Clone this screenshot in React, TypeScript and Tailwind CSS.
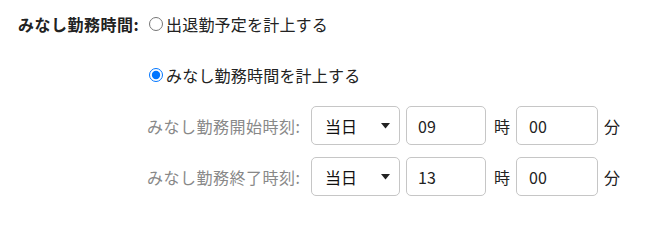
import React from "react";

const font = { fontFamily: '"Noto Sans CJK JP", "Noto Sans", sans-serif' };

function TimeRow({ label, hour }: { label: string; hour: string }) {
  return (
    <div className="flex items-center h-[39px]">
      <div className="w-[164px] text-[16px] text-[#888888] whitespace-nowrap tracking-[0.5px]">{label}</div>
      <div className="w-[89px] h-[39px] border border-[#c6c6c6] rounded-[5px] flex items-center pl-[13px] pr-[9px] justify-between bg-white">
        <span className="text-[16px] text-[#111111]">当日</span>
        <svg width="9" height="6" viewBox="0 0 9 6"><path d="M0 0 L9 0 L4.5 5.5 Z" fill="#222222" /></svg>
      </div>
      <div className="ml-[6px] w-[80px] h-[39px] border border-[#c6c6c6] rounded-[5px] flex items-center pl-[11px] text-[16px] text-[#222222] bg-white">{hour}</div>
      <span className="ml-[8px] text-[16px] text-[#222222]">時</span>
      <div className="ml-[6px] w-[82px] h-[39px] border border-[#c6c6c6] rounded-[5px] flex items-center pl-[12px] text-[16px] text-[#222222] bg-white">00</div>
      <span className="ml-[6px] text-[16px] text-[#222222]">分</span>
    </div>
  );
}

export default function App() {
  return (
    <div className="w-[655px] h-[217px] bg-white pt-[4px] pl-[18px]" style={font}>
      <div className="flex">
        <div className="w-[129px] h-[39px] flex items-center font-bold text-[16px] text-[#222222] whitespace-nowrap tracking-[0.5px]">みなし勤務時間:</div>
        <div className="flex flex-col gap-[12px]">
          <label className="flex items-center h-[39px] text-[16px] text-[#222222] tracking-[0.2px]">
            <input type="radio" name="m" className="m-0 ml-[2px] w-[14px] h-[14px] mr-[3px]" />
            出退勤予定を計上する
          </label>
          <label className="flex items-center h-[39px] text-[16px] text-[#222222] tracking-[0.2px]">
            <input type="radio" name="m" defaultChecked className="m-0 ml-[2px] w-[14px] h-[14px] mr-[3px]" />
            みなし勤務時間を計上する
          </label>
          <TimeRow label="みなし勤務開始時刻:" hour="09" />
          <TimeRow label="みなし勤務終了時刻:" hour="13" />
        </div>
      </div>
    </div>
  );
}
